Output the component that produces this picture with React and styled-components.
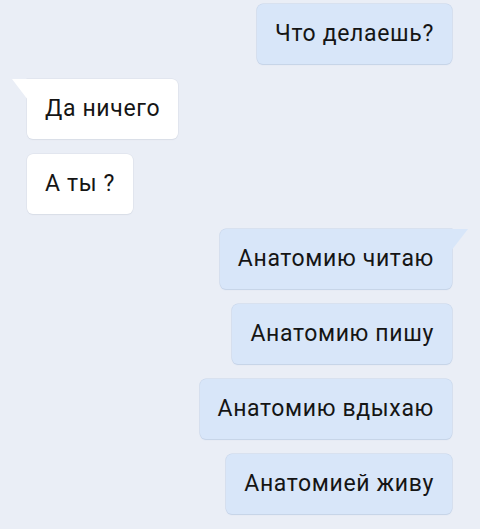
import React from "react";
import styled, { createGlobalStyle, css } from "styled-components";

const Color = {
  page: "#eaeef6",
  outgoing: "#d8e6f9",
  outgoingEdge: "#c5d3e8",
  incoming: "#ffffff",
  incomingEdge: "#d9dee8",
  text: "#151515",
};

const GlobalStyle = createGlobalStyle`
  html, body {
    margin: 0;
    padding: 0;
    background: ${Color.page};
  }

  body {
    font-family: Roboto, "Noto Sans", "Liberation Sans", sans-serif;
    -webkit-font-smoothing: antialiased;
  }
`;

const Thread = styled.div`
  box-sizing: border-box;
  display: flex;
  flex-direction: column;
  gap: 15px;
  height: 529px;
  padding: 4px 28px 0 27px;
  width: 480px;
`;

const tailIn = css`
  &::before {
    background: ${Color.incoming};
    clip-path: polygon(0 0, 100% 0, 100% 100%);
    content: "";
    height: 21px;
    left: -15px;
    position: absolute;
    top: 0;
    width: 16px;
  }
`;

const tailOut = css`
  &::before {
    background: ${Color.outgoing};
    clip-path: polygon(0 0, 100% 0, 0 100%);
    content: "";
    height: 22px;
    position: absolute;
    right: -16px;
    top: 0;
    width: 17px;
  }
`;

const Bubble = styled.div`
  align-items: center;
  align-self: ${({ $out }) => ($out ? "flex-end" : "flex-start")};
  background: ${({ $out }) => ($out ? Color.outgoing : Color.incoming)};
  border-radius: 6px;
  box-shadow: 0 0 0 0.5px
      ${({ $out }) => ($out ? Color.outgoingEdge : Color.incomingEdge)},
    0 1px 1px ${({ $out }) => ($out ? Color.outgoingEdge : Color.incomingEdge)};
  box-sizing: border-box;
  color: ${Color.text};
  display: flex;
  font-size: 23px;
  height: 60px;
  letter-spacing: 0.65px;
  padding: 0 18px 1px;
  position: relative;
  white-space: nowrap;

  ${({ $tail, $out }) => $tail && ($out ? tailOut : tailIn)}
  ${({ $tail, $out }) =>
    $tail && ($out ? "border-top-right-radius: 0;" : "border-top-left-radius: 0;")}
`;

const messages = [
  { text: "Что делаешь?", out: true },
  { text: "Да ничего", out: false, tail: true },
  { text: "А ты ?", out: false },
  { text: "Анатомию читаю", out: true, tail: true },
  { text: "Анатомию пишу", out: true },
  { text: "Анатомию вдыхаю", out: true },
  { text: "Анатомией живу", out: true },
];

export default function App() {
  return (
    <>
      <GlobalStyle />
      <Thread>
        {messages.map(({ text, out, tail }) => (
          <Bubble key={text} $out={out} $tail={tail}>
            {text}
          </Bubble>
        ))}
      </Thread>
    </>
  );
}
